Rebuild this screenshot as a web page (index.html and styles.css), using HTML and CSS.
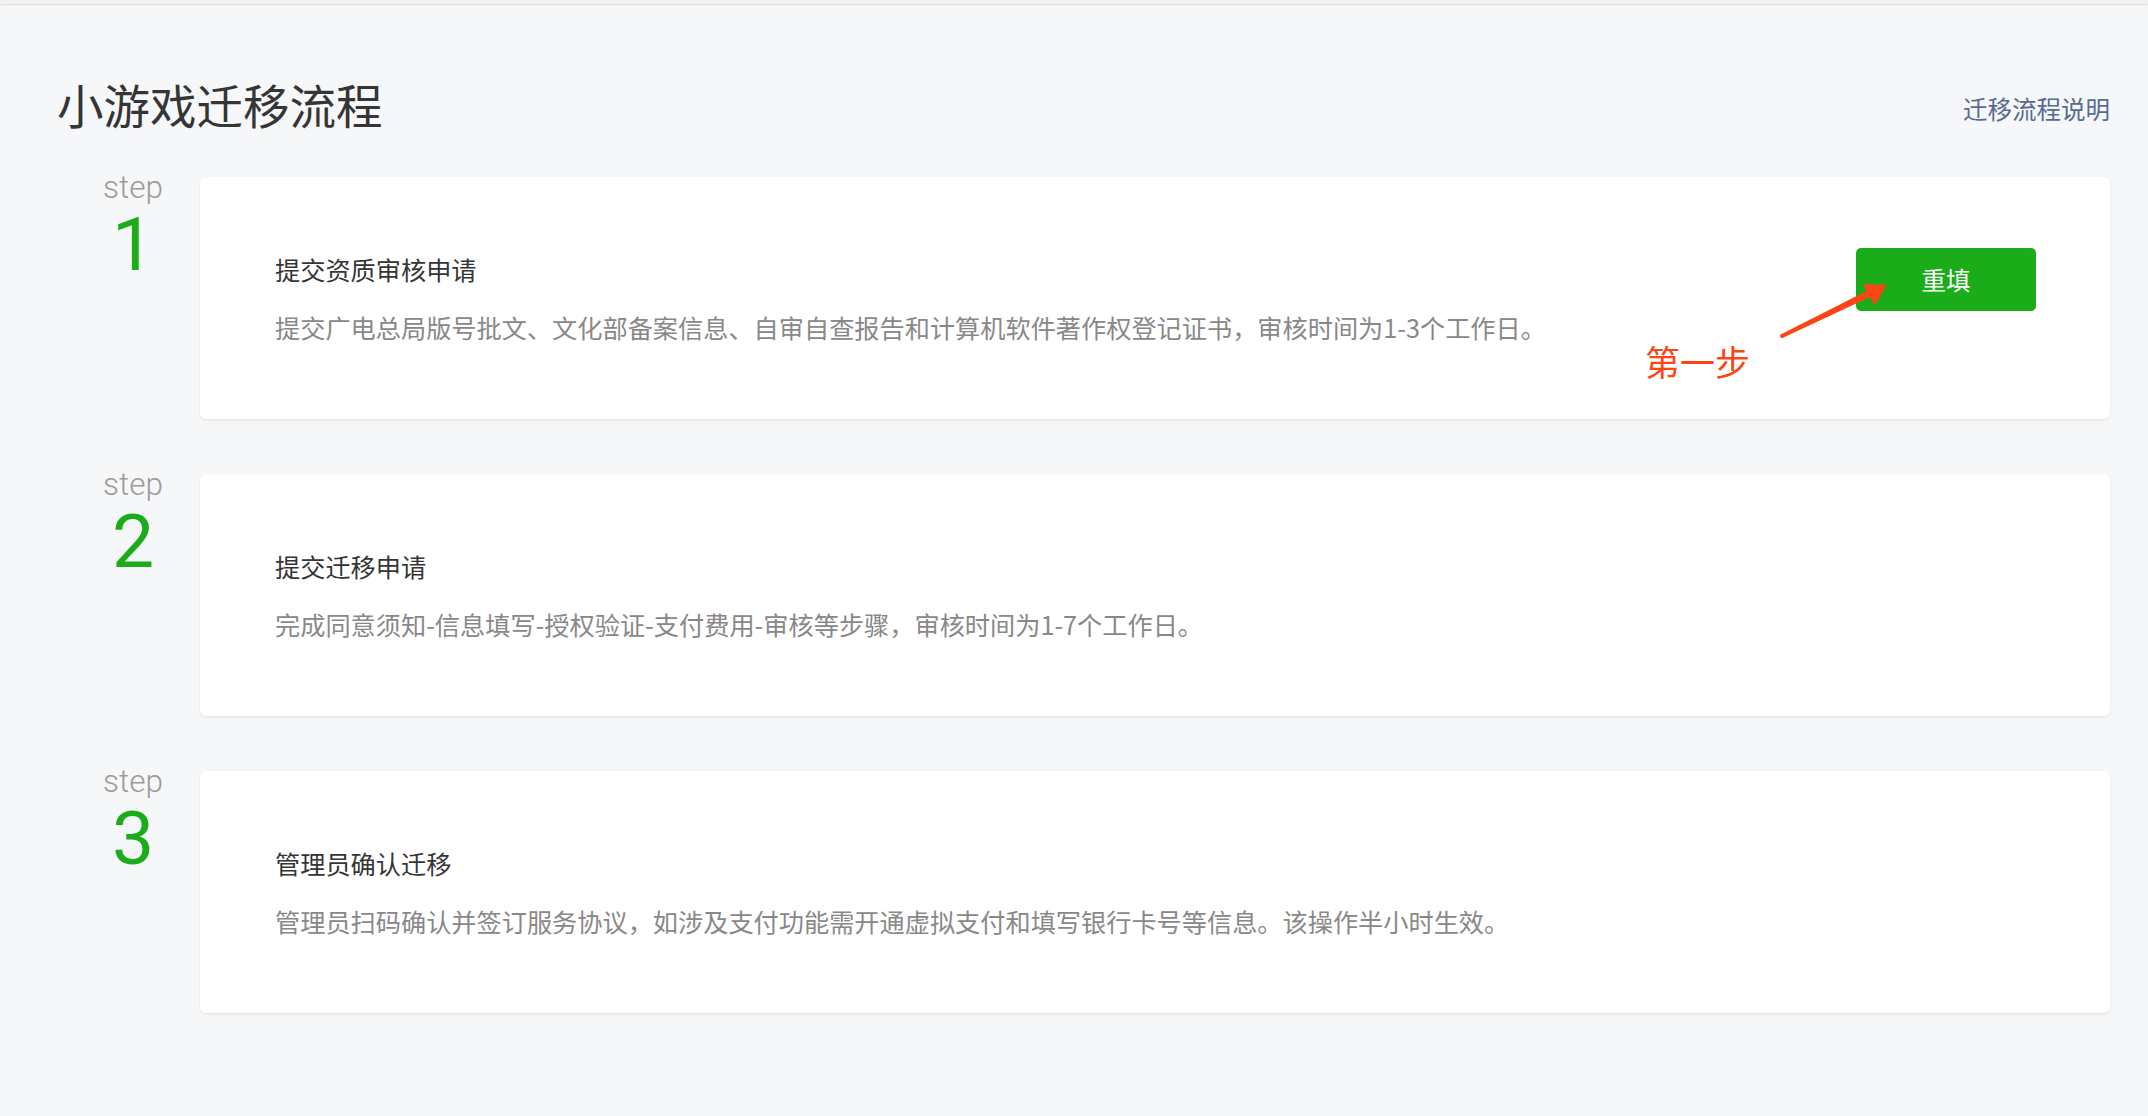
FILE: index.html
```html
<!DOCTYPE html>
<html lang="zh-CN">
<head>
    <meta charset="UTF-8">
    <meta name="viewport" content="width=device-width, initial-scale=1.0">
    <title>小游戏迁移流程</title>
    <link rel="stylesheet" href="styles.css">
</head>
<body>
    <div class="topbar"></div>

    <div class="page">
        <div class="header">
            <h1 class="page-title">小游戏迁移流程</h1>
            <a class="help-link" href="#">迁移流程说明</a>
        </div>

        <div class="steps">
            <!-- step 1 -->
            <div class="step-row">
                <div class="step-no">
                    <div class="step-label">step</div>
                    <div class="step-num">1</div>
                </div>
                <div class="card">
                    <div class="card-text">
                        <div class="card-title">提交资质审核申请</div>
                        <div class="card-desc">提交广电总局版号批文、文化部备案信息、自审自查报告和计算机软件著作权登记证书，审核时间为1-3个工作日。</div>
                    </div>
                    <button class="btn-primary">重填</button>

                    <!-- annotation drawn over the card -->
                    <svg class="note-arrow" width="116" height="61" viewBox="0 0 116 61">
                        <path d="M5.1 54.2 L90.5 10.9 L87.3 4 L110.7 5 L99 25 L93.5 17.2 L6.9 57.8 Z" fill="#fc4514"/>
                        <circle cx="6" cy="56" r="2" fill="#fc4514"/>
                    </svg>
                    <div class="note-text">第一步</div>
                </div>
            </div>

            <!-- step 2 -->
            <div class="step-row">
                <div class="step-no">
                    <div class="step-label">step</div>
                    <div class="step-num">2</div>
                </div>
                <div class="card">
                    <div class="card-text">
                        <div class="card-title">提交迁移申请</div>
                        <div class="card-desc">完成同意须知-信息填写-授权验证-支付费用-审核等步骤，审核时间为1-7个工作日。</div>
                    </div>
                </div>
            </div>

            <!-- step 3 -->
            <div class="step-row">
                <div class="step-no">
                    <div class="step-label">step</div>
                    <div class="step-num">3</div>
                </div>
                <div class="card">
                    <div class="card-text">
                        <div class="card-title">管理员确认迁移</div>
                        <div class="card-desc">管理员扫码确认并签订服务协议，如涉及支付功能需开通虚拟支付和填写银行卡号等信息。该操作半小时生效。</div>
                    </div>
                </div>
            </div>
        </div>
    </div>
</body>
</html>
```

FILE: styles.css
```css
body {
    margin: 0;
    background-color: #f6f7f9;
    font-family: Roboto, "Noto Sans CJK SC", sans-serif;
    color: #353535;
}

.topbar {
    height: 4px;
    background-color: #f1f1f1;
    box-shadow: 0 1px 2px rgba(0, 0, 0, 0.12);
}

.page {
    padding: 74px 38px 60px 57px;
}

.header {
    display: flex;
    justify-content: space-between;
    align-items: center;
    height: 60px;
    margin-bottom: 39px;
}

.page-title {
    margin: 0;
    font-size: 46.5px;
    font-weight: 400;
    line-height: 60px;
    color: #353535;
}

.help-link {
    font-size: 24.5px;
    color: #576b95;
    text-decoration: none;
}

.step-row {
    display: flex;
    align-items: flex-start;
    margin-bottom: 55px;
}

.step-no {
    width: 134px;
    padding-left: 9px;
    flex-shrink: 0;
    text-align: center;
}

.step-label {
    font-size: 31.5px;
    font-weight: 300;
    line-height: 22px;
    color: #9b9b9b;
}

.step-num {
    font-size: 75px;
    font-weight: 400;
    line-height: 90px;
    color: #1aad19;
}

.card {
    position: relative;
    flex: 1;
    display: flex;
    justify-content: space-between;
    align-items: flex-start;
    padding: 73px 74px 72px 75px;
    background-color: #fff;
    border-radius: 6px;
    box-shadow: 0 1px 3px rgba(0, 0, 0, 0.09);
}

.card-text {
    font-family: "Noto Sans CJK SC", sans-serif;
}

.card-title {
    font-size: 25.2px;
    line-height: 39px;
    color: #353535;
    margin-bottom: 19px;
}

.card-desc {
    font-size: 25.2px;
    line-height: 39px;
    color: #888;
}

.btn-primary {
    flex-shrink: 0;
    width: 180px;
    height: 63px;
    margin-top: -2px;
    border: none;
    border-radius: 5px;
    background-color: #1aad19;
    color: #fff;
    font-family: "Noto Sans CJK SC", sans-serif;
    font-size: 24.5px;
}

/* red hint drawn on top of the first card */
.note-arrow {
    position: absolute;
    top: 103px;
    right: 218px;
}

.note-text {
    position: absolute;
    top: 169px;
    right: 360px;
    font-size: 35px;
    line-height: 38px;
    color: #fc4514;
}
```
